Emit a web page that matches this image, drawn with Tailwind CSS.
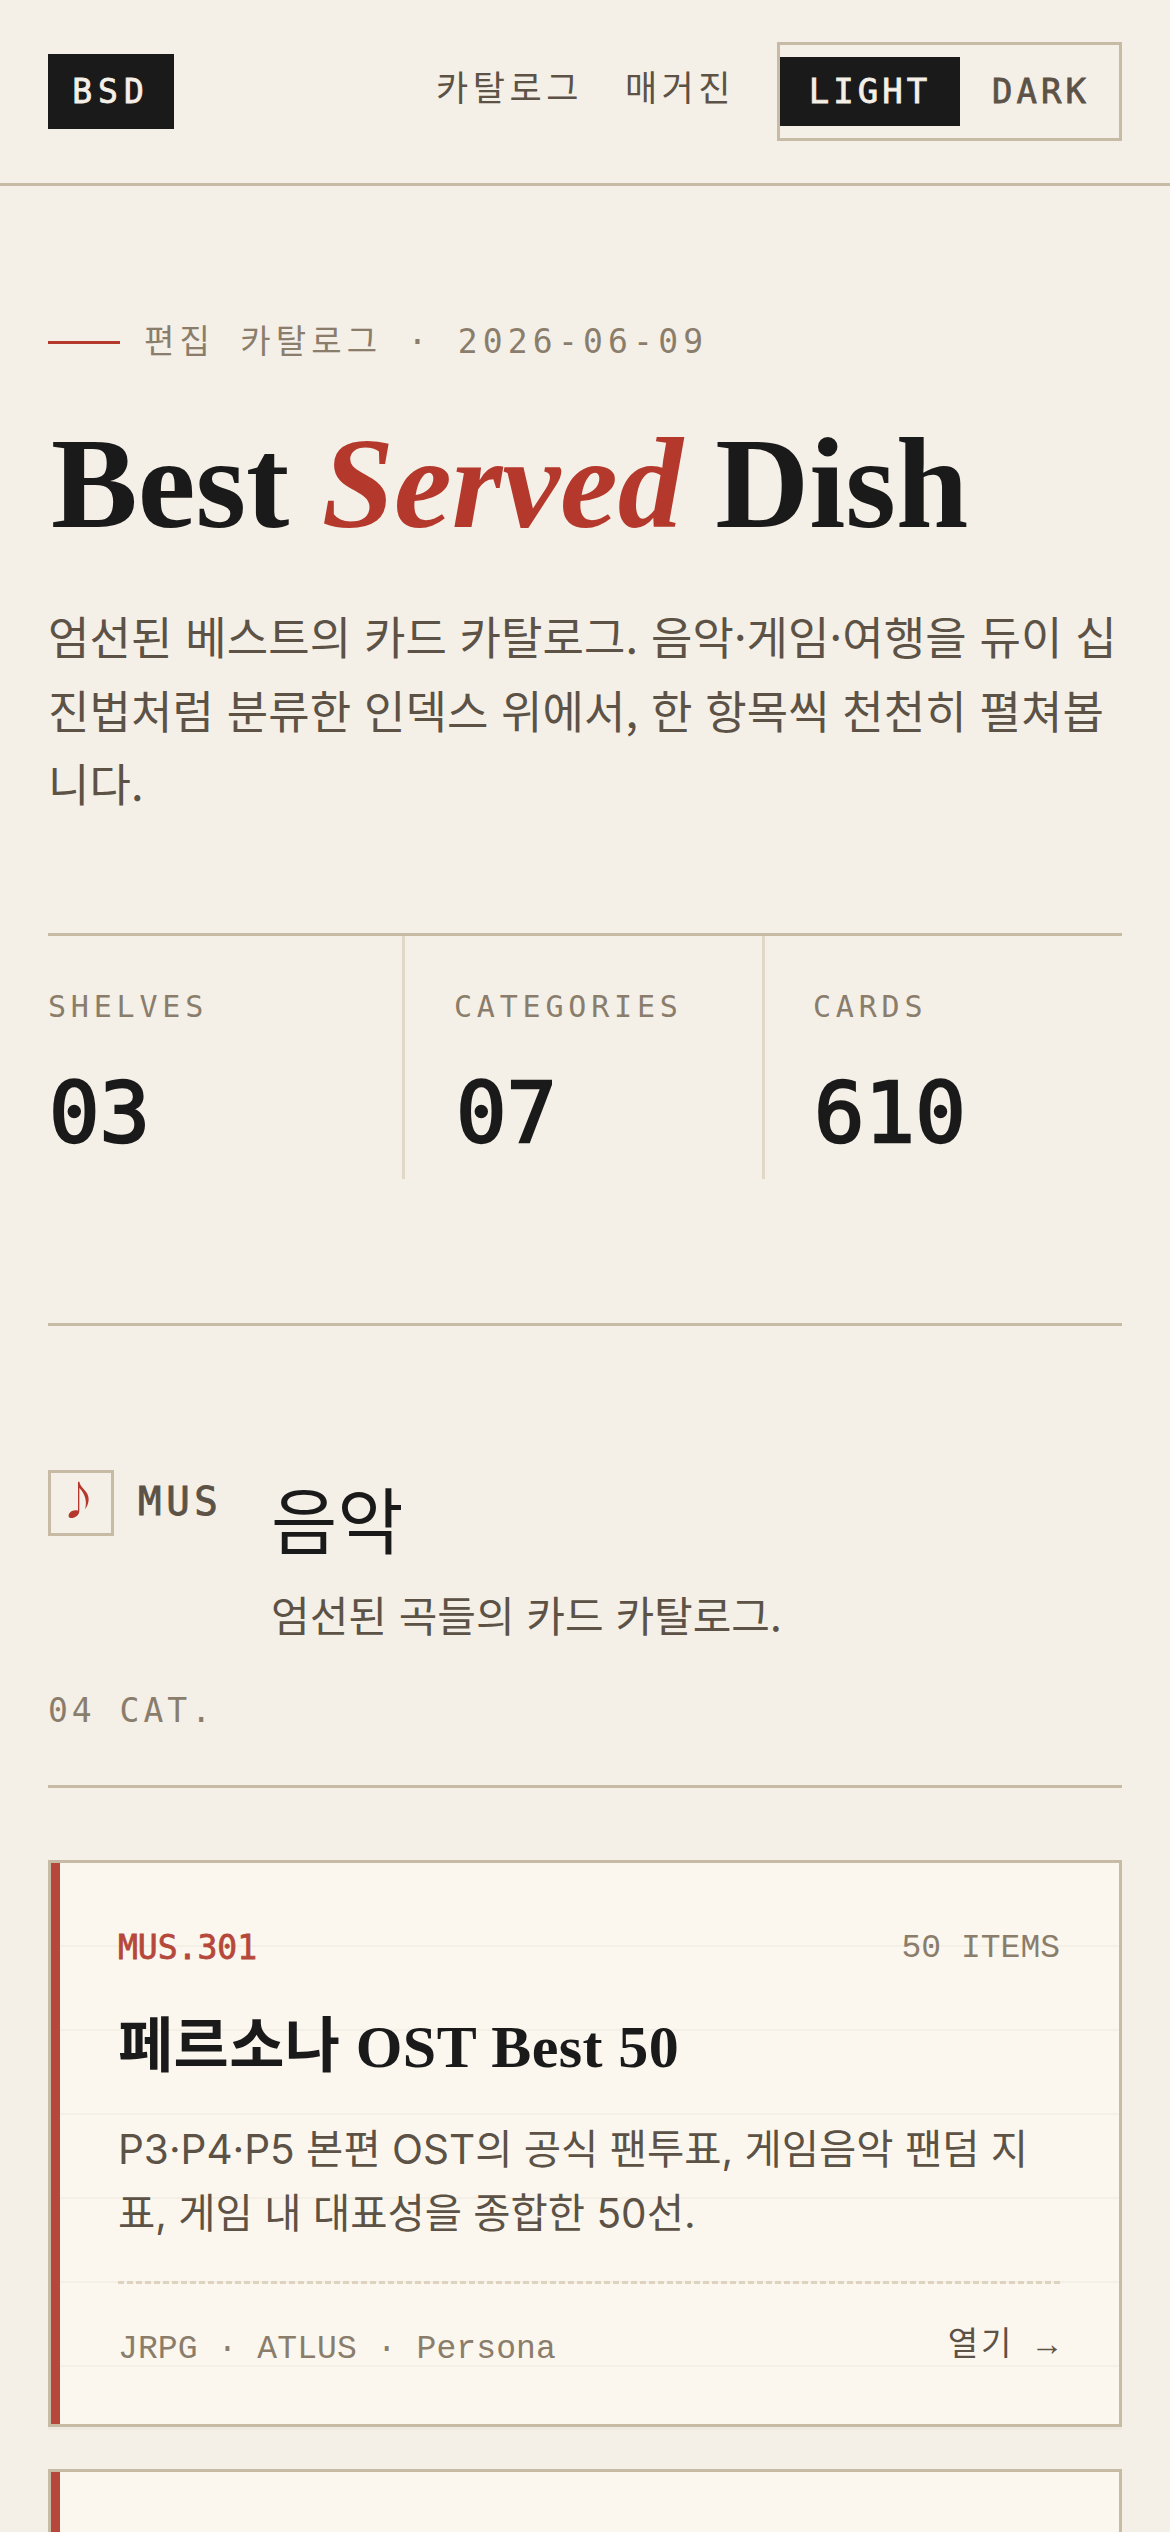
<!DOCTYPE html>
<html lang="ko">
<head>
  <meta charset="UTF-8" />
  <meta name="viewport" content="width=device-width, initial-scale=1" />
  <title>BSD - Best Served Dish</title>
  <script src="https://cdn.jsdelivr.net/npm/@tailwindcss/browser@4"></script>
</head>
<body class="bg-[#f4efe7] text-[#1a1a1a] font-['Noto_Sans_CJK_KR',sans-serif]">
<div class="h-[2532px] overflow-hidden">

  <!-- Header -->
  <header class="h-[186px] px-[48px] flex items-center justify-between border-b-[3px] border-[#c8bba5]">
    <div class="w-[126px] h-[75px] bg-[#1a1a1a] text-[#f4efe7] flex items-center justify-center font-['DejaVu_Sans_Mono',monospace] text-[33px] tracking-[6px] [-webkit-text-stroke:0.8px_currentColor]">BSD</div>
    <div class="flex items-center">
      <nav class="flex gap-[42px] text-[35px] tracking-[4.5px] text-[#5c5246] mr-[42px] -mt-[11px]">
        <a>카탈로그</a>
        <a>매거진</a>
      </nav>
      <div class="w-[345px] h-[99px] border-[3px] border-[#c8bba5] flex items-center font-['DejaVu_Sans_Mono',monospace] text-[34px] tracking-[4px] [-webkit-text-stroke:0.8px_currentColor]">
        <span class="w-[180px] h-[69px] bg-[#1a1a1a] text-[#f4efe7] flex items-center justify-center">LIGHT</span>
        <span class="w-[159px] h-[69px] pl-[3px] text-[#5c5246] flex items-center justify-center">DARK</span>
      </div>
    </div>
  </header>

  <main class="px-[48px]">
    <!-- Hero -->
    <section class="pt-[131px]">
      <div class="flex items-center gap-[24px] text-[33px] text-[#8a7d6b] font-['DejaVu_Sans_Mono','Noto_Sans_CJK_KR',monospace] tracking-[5.2px] h-[50px]">
        <span class="w-[72px] h-[3px] bg-[#b5382c]"></span>
        <span>편집 카탈로그 · 2026-06-09</span>
      </div>
      <h1 class="mt-[44px] pl-[3px] font-['Liberation_Serif',serif] font-bold text-[130px] leading-[144px]">Best <em class="text-[#b5382c]">Served</em> Dish</h1>
      <p class="mt-[44px] text-[45px] tracking-[0.1px] leading-[73.5px] text-[#5c5246]">엄선된 베스트의 카드 카탈로그. 음악·게임·여행을 듀이 십진법처럼 분류한 인덱스 위에서, 한 항목씩 천천히 펼쳐봅니다.</p>
    </section>

    <!-- Stats -->
    <section class="mt-[113.5px] grid grid-cols-[357px_360px_357px] border-t-[3px] border-[#c8bba5] h-[246px]">
      <div class="pt-[48px]">
        <p class="text-[30px] tracking-[4.8px] text-[#8a7d6b] font-['DejaVu_Sans_Mono',monospace]">SHELVES</p>
        <p class="mt-[34px] text-[84px] leading-[100px] [-webkit-text-stroke:2.5px_currentColor] font-['DejaVu_Sans_Mono',monospace] pl-[1px]">03</p>
      </div>
      <div class="border-x-[3px] border-[#e0d7c4] pt-[48px] pl-[48px] -ml-[3px] w-[363px]">
        <p class="text-[30px] tracking-[4.8px] text-[#8a7d6b] font-['DejaVu_Sans_Mono',monospace] pl-[1px]">CATEGORIES</p>
        <p class="mt-[34px] text-[84px] leading-[100px] [-webkit-text-stroke:2.5px_currentColor] font-['DejaVu_Sans_Mono',monospace] pl-[3px]">07</p>
      </div>
      <div class="pt-[48px] pl-[48px]">
        <p class="text-[30px] tracking-[4.8px] text-[#8a7d6b] font-['DejaVu_Sans_Mono',monospace]">CARDS</p>
        <p class="mt-[34px] text-[84px] leading-[100px] [-webkit-text-stroke:2.5px_currentColor] font-['DejaVu_Sans_Mono',monospace] pl-[1px]">610</p>
      </div>
    </section>

    <!-- Section heading -->
    <section class="mt-[144px] border-t-[3px] border-[#c8bba5] pt-[144px]">
      <div class="flex items-start">
        <div class="w-[66px] h-[66px] border-[3px] border-[#c8bba5] flex items-center justify-center shrink-0">
          <svg class="w-[30px] h-[50px]" viewBox="78 54 90 150" fill="#b5382c"><path d="M114 65 L118 65 C120 85 148 92 146 120 C145 132 140 142 135 148 C141 128 138 104 118 84 L118 152 C118 165 105 175 92 174 C82 173 85 158 96 153 C103 150 110 150 114 152 Z" /></svg>
        </div>
        <span class="ml-[24px] mt-[3px] w-[133px] text-[39px] tracking-[4.7px] text-[#5c5246] font-['DejaVu_Sans_Mono',monospace] [-webkit-text-stroke:0.9px_currentColor]">MUS</span>
        <div>
          <h2 class="text-[72px] leading-[96px] -mt-[1px]">음악</h2>
          <p class="mt-[17px] text-[42px] text-[#5c5246]">엄선된 곡들의 카드 카탈로그.</p>
        </div>
      </div>
      <p class="mt-[41px] text-[33px] tracking-[4px] text-[#8a7d6b] font-['DejaVu_Sans_Mono',monospace]">04 CAT.</p>
      <div class="mt-[49.5px] border-t-[3px] border-[#c8bba5]"></div>
    </section>

    <!-- Cards -->
    <section class="mt-[72px] flex flex-col gap-[42px]">
      <article class="h-[567px] border-[3px] border-[#c8bba5] flex bg-[#fbf7ef] bg-[repeating-linear-gradient(transparent_0,transparent_82px,#f5f0e6_82px,#f5f0e6_84px)] shadow-[0_3px_0_#efeae1]">
        <div class="w-[9px] bg-[#b5483a] shrink-0"></div>
        <div class="flex-1 pl-[58px] pr-[59px] pt-[60px]">
          <div class="flex justify-between text-[33px]">
            <span class="text-[#b5483a] font-['DejaVu_Sans_Mono',monospace] [-webkit-text-stroke:0.8px_currentColor]">MUS.301</span>
            <span class="text-[#8a7d6b] font-['Liberation_Mono',monospace] pt-[1px]">50 ITEMS</span>
          </div>
          <h3 class="mt-[28px] font-['Liberation_Serif','Noto_Sans_CJK_KR',serif] font-bold text-[60px] tracking-[0.4px]">페르소나 OST Best 50</h3>
          <p class="mt-[26px] text-[40.5px] leading-[64px] text-[#5c5246] font-['Inter','Noto_Sans_CJK_KR',sans-serif]">P3·P4·P5 본편 OST의 공식 팬투표, 게임음악 팬덤 지표, 게임 내 대표성을 종합한 50선.</p>
          <div class="mt-[35px] pt-[41px] border-t-[3px] border-dashed border-[#ddd3bf] flex justify-between items-center">
            <span class="font-['Liberation_Mono',monospace] text-[33px] tracking-[0.1px] text-[#8a7d6b]">JRPG · ATLUS · Persona</span>
            <span class="font-['Liberation_Mono','Noto_Sans_CJK_KR',monospace] text-[33px] tracking-[3px] text-[#5c5246] -mt-[6px]">열기 →</span>
          </div>
        </div>
      </article>
      <article class="h-[567px] border-[3px] border-[#c8bba5] flex bg-[#fbf7ef] bg-[repeating-linear-gradient(transparent_0,transparent_82px,#f5f0e6_82px,#f5f0e6_84px)] shadow-[0_3px_0_#efeae1]">
        <div class="w-[9px] bg-[#b5483a] shrink-0"></div>
      </article>
    </section>
  </main>
</div>
</body>
</html>
